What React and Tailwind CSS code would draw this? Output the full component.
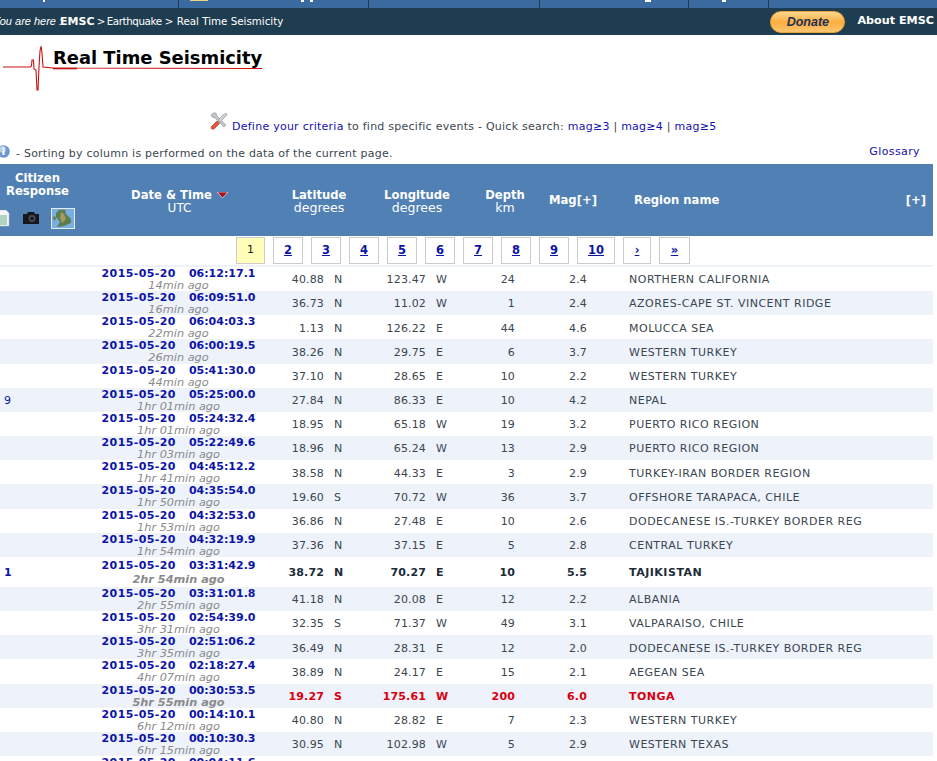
const rows = [
  ['06:12:17.1', '14min ago', '40.88', 'N', '123.47', 'W', '24', '2.4', 'NORTHERN CALIFORNIA'],
  ['06:09:51.0', '16min ago', '36.73', 'N', '11.02', 'W', '1', '2.4', 'AZORES-CAPE ST. VINCENT RIDGE'],
  ['06:04:03.3', '22min ago', '1.13', 'N', '126.22', 'E', '44', '4.6', 'MOLUCCA SEA'],
  ['06:00:19.5', '26min ago', '38.26', 'N', '29.75', 'E', '6', '3.7', 'WESTERN TURKEY'],
  ['05:41:30.0', '44min ago', '37.10', 'N', '28.65', 'E', '10', '2.2', 'WESTERN TURKEY'],
  ['05:25:00.0', '1hr 01min ago', '27.84', 'N', '86.33', 'E', '10', '4.2', 'NEPAL', '9'],
  ['05:24:32.4', '1hr 01min ago', '18.95', 'N', '65.18', 'W', '19', '3.2', 'PUERTO RICO REGION'],
  ['05:22:49.6', '1hr 03min ago', '18.96', 'N', '65.24', 'W', '13', '2.9', 'PUERTO RICO REGION'],
  ['04:45:12.2', '1hr 41min ago', '38.58', 'N', '44.33', 'E', '3', '2.9', 'TURKEY-IRAN BORDER REGION'],
  ['04:35:54.0', '1hr 50min ago', '19.60', 'S', '70.72', 'W', '36', '3.7', 'OFFSHORE TARAPACA, CHILE'],
  ['04:32:53.0', '1hr 53min ago', '36.86', 'N', '27.48', 'E', '10', '2.6', 'DODECANESE IS.-TURKEY BORDER REG'],
  ['04:32:19.9', '1hr 54min ago', '37.36', 'N', '37.15', 'E', '5', '2.8', 'CENTRAL TURKEY'],
  ['03:31:42.9', '2hr 54min ago', '38.72', 'N', '70.27', 'E', '10', '5.5', 'TAJIKISTAN', '1', 'big'],
  ['03:31:01.8', '2hr 55min ago', '41.18', 'N', '20.08', 'E', '12', '2.2', 'ALBANIA'],
  ['02:54:39.0', '3hr 31min ago', '32.35', 'S', '71.37', 'W', '49', '3.1', 'VALPARAISO, CHILE'],
  ['02:51:06.2', '3hr 35min ago', '36.49', 'N', '28.31', 'E', '12', '2.0', 'DODECANESE IS.-TURKEY BORDER REG'],
  ['02:18:27.4', '4hr 07min ago', '38.89', 'N', '24.17', 'E', '15', '2.1', 'AEGEAN SEA'],
  ['00:30:53.5', '5hr 55min ago', '19.27', 'S', '175.61', 'W', '200', '6.0', 'TONGA', '', 'red'],
  ['00:14:10.1', '6hr 12min ago', '40.80', 'N', '28.82', 'E', '7', '2.3', 'WESTERN TURKEY'],
  ['00:10:30.3', '6hr 15min ago', '30.95', 'N', '102.98', 'W', '5', '2.9', 'WESTERN TEXAS'],
];

const pages = [
  ['2', 'w-[30px]', 'mr-[8px]'], ['3', 'w-[30px]', 'mr-[8px]'], ['4', 'w-[30px]', 'mr-[8px]'],
  ['5', 'w-[30px]', 'mr-[8px]'], ['6', 'w-[30px]', 'mr-[8px]'], ['7', 'w-[30px]', 'mr-[8px]'],
  ['8', 'w-[30px]', 'mr-[8px]'], ['9', 'w-[30px]', 'mr-[8px]'], ['10', 'w-[38px]', 'mr-[8px]'],
  ['›', 'w-[28px]', 'mr-[8px]'], ['»', 'w-[31px]', ''],
];

function Seismo() {
  return (
    <svg width="262" height="56" viewBox="0 0 262 56" className="block">
      <path
        d="M3 22 H30 L31.5 21 L32 15 L33.5 15 L34 24 L36 25 L37 45 L38 45 L39 22 L40 6 L41 1 L42 8 L43 22 L53 23 L262 23.5"
        fill="none"
        stroke="#c81010"
        strokeWidth="1.1"
      />
      <path d="M53 23.5 H77" stroke="#c81010" strokeWidth="1.6" />
    </svg>
  );
}

function ToolsIcon() {
  return (
    <svg width="18" height="18" viewBox="0 0 18 18" className="shrink-0">
      <path d="M3 1 L6 1 L7 4 L16 13 L14 15 L5 6 L2 5 L1 3 Z" fill="#c3c7cd" stroke="#8b9098" strokeWidth="0.6" />
      <path d="M16 1 L17 3 L14 6 L10 10 L8 8 L13 3 Z" fill="#cfd3d8" stroke="#8b9098" strokeWidth="0.6" />
      <path d="M7 9 L9.5 11.5 L4 17 L1.5 17 L1 15 Z" fill="#df5a3c" stroke="#a8301c" strokeWidth="0.6" />
    </svg>
  );
}

function InfoIcon() {
  return (
    <svg width="13" height="13" viewBox="0 0 13 13" className="shrink-0 -ml-[3px] -mt-[6px]">
      <circle cx="6.5" cy="6.5" r="6.3" fill="#6f96cf" />
      <circle cx="5.5" cy="4.5" r="3.4" fill="#b9cfee" />
      <rect x="5.5" y="5.5" width="2" height="4.5" fill="#fff" />
      <rect x="5.5" y="2.6" width="2" height="2" fill="#fff" />
    </svg>
  );
}

function HeaderIcons() {
  return (
    <div className="flex items-center h-[24px] mt-[8px] -ml-[2px]">
      <svg width="11" height="17" viewBox="0 0 11 17" className="shrink-0">
        <path d="M0 0 H7 L10 3 V16 H0 Z" fill="#f5f8fa" stroke="#b8c4cc" strokeWidth="0.5" />
        <path d="M1 6 H8 M1 8 H8 M1 10 H8 M1 12 H8 M1 14 H8" stroke="#6fae84" strokeWidth="1" />
      </svg>
      <svg width="16" height="12" viewBox="0 0 16 12" className="ml-[13px] shrink-0">
        <path d="M0 2 H4 L5 0 H11 L12 2 H16 V12 H0 Z" fill="#15181c" />
        <circle cx="9" cy="6.5" r="3.4" fill="#4a5058" />
        <circle cx="9" cy="6.5" r="1.8" fill="#15181c" />
      </svg>
      <svg width="24" height="21" viewBox="0 0 24 21" className="ml-[12px] shrink-0">
        <rect x="0.5" y="0.5" width="23" height="20" fill="#79aee0" stroke="#e4ecf3" />
        <path d="M8 2 L14 1.5 L15 6 L20 11 L20 15 L13 18 L6 19 L9 14 L5 9 L5 5 Z" fill="#5b7d50" />
        <path d="M10 4 L13 6 L15 11 L11 15 L9 10 Z" fill="#a49a62" />
        <path d="M2 9 L4 8 L5 11 L3 13 Z" fill="#5b7d50" />
      </svg>
    </div>
  );
}

function DateLine({ time, className }) {
  return (
    <div className={`font-bold text-[#0c14a8] whitespace-nowrap ${className}`}>
      <span className="tracking-[0.4px]">2015-05-20</span>
      <span className="ml-[13px]">{time}</span>
    </div>
  );
}

function Row({ row, index }) {
  const [time, ago, lat, ns, lon, ew, depth, mag, region, count, kind] = row;
  const big = kind === 'big';
  const bold = big || kind === 'red';
  const tone = kind === 'red' ? 'text-[#d8000c] font-bold' : big ? 'text-[#1d2c38] font-bold' : 'text-[#3a4650]';
  return (
    <div className={`flex text-[11px] ${big ? 'h-[30px] pt-[2px]' : 'h-[24.17px] pt-[1px]'} ${index % 2 ? 'bg-[#edf2fb]' : 'bg-white'}`}>
      <div className={`w-[100px] pl-[4px] flex items-center text-[#0c14a8] ${big ? 'font-bold' : 'pt-[2px]'}`}>{count}</div>
      <div className="w-[157px] flex flex-col items-center">
        <DateLine time={time} className={big ? 'leading-[13px]' : 'leading-[12px]'} />
        <div className={`italic text-[#8a8a8a] leading-[12px] text-[11.3px] ${bold ? 'font-bold' : ''} ${big ? 'mt-[2px]' : ''}`}>{ago}</div>
      </div>
      <div className={`flex flex-1 items-center tracking-[0.15px] ${big ? '' : 'pt-[2px]'} ${tone}`}>
        <div className="w-[67px] text-right">{lat}</div>
        <div className="w-[25px] pl-[10px]">{ns}</div>
        <div className="w-[77px] text-right">{lon}</div>
        <div className="w-[30px] pl-[10px]">{ew}</div>
        <div className="w-[67px] text-right pr-[8px]">{depth}</div>
        <div className="w-[64px] text-right">{mag}</div>
        <div className="pl-[42px] whitespace-nowrap tracking-[0.5px]">{region}</div>
      </div>
    </div>
  );
}

export default function App() {
  return (
    <div className="w-[937px] h-[761px] overflow-hidden bg-white text-[11px] text-[#3a4650] font-['DejaVu_Sans','Liberation_Sans',sans-serif]">
      <div className="relative h-[8px] bg-[#3a6a9f] flex">
        <div className="w-[179px] border-r border-[#1f3d50]" />
        <div className="w-[190px] border-r border-[#1f3d50]" />
        <div className="w-[171px] border-r border-[#1f3d50]" />
        <div className="w-[149px] border-r border-[#1f3d50]" />
        <div className="w-[80px] border-r border-[#1f3d50]" />
        {/* bottoms of the menu labels and icon, the rest is scrolled out of view */}
        <span className="absolute left-[43px] top-0 w-[2px] h-[2px] bg-white" />
        <span className="absolute left-[190px] top-0 w-[18px] h-[1px] bg-[#e8d77a]" />
        <span className="absolute left-[301px] top-0 w-[3px] h-[2px] bg-white" />
        <span className="absolute left-[310px] top-0 w-[3px] h-[2px] bg-white" />
        <span className="absolute left-[645px] top-0 w-[6px] h-[2px] bg-white" />
        <span className="absolute left-[722px] top-0 w-[4px] h-[2px] bg-white" />
      </div>

      <div className="h-[27px] bg-[#1f3d50] flex items-center justify-between text-white">
        <div className="flex items-baseline whitespace-pre -ml-[7px] text-[10.3px]">
          <span className="italic w-[67px] font-['Liberation_Sans',sans-serif] text-[11px]">You are here :</span>
          <span className="font-bold text-[11px]">EMSC</span>
          <span className="tracking-[-1px]"> &gt; </span>
          <span className="tracking-[-0.4px]">Earthquake</span>
          <span> &gt; Real Time Seismicity</span>
        </div>
        <div className="flex items-center">
          <div className="w-[75px] h-[22px] mt-[1px] rounded-full border border-[#e8a33a] bg-gradient-to-b from-[#fdd78e] via-[#fbae3c] to-[#fcc470] flex items-center justify-center italic font-bold font-['Liberation_Sans',sans-serif] text-[#1c3058] text-[12.5px]">
            Donate
          </div>
          <div className="ml-[12px] mr-[3px] font-bold text-[11.2px]">About EMSC</div>
        </div>
      </div>

      <div className="relative h-[129px]">
        <div className="pt-[10px]"><Seismo /></div>
        <h1 className="absolute left-[53px] top-[11px] text-[17.9px] leading-[24px] font-bold text-black">Real Time Seismicity</h1>
        <div className="absolute left-[210px] top-[77px] flex items-start whitespace-nowrap tracking-[0.25px]">
          <ToolsIcon />
          <div className="ml-[4px] mt-[8px] leading-[14px]">
            <span className="text-[#1410b4]">Define your criteria</span> to find specific events - Quick search:{' '}
            <span className="text-[#1410b4]">mag≥3</span> | <span className="text-[#1410b4]">mag≥4</span> | <span className="text-[#1410b4]">mag≥5</span>
          </div>
        </div>
        <div className="absolute left-0 right-[17px] top-[111px] flex items-center justify-between tracking-[0.23px]">
          <div className="flex items-center">
            <InfoIcon />
            <span className="ml-[6px]">- Sorting by column is performed on the data of the current page.</span>
          </div>
          <span className="text-[#1410b4] -mt-[5px] tracking-[0.4px]">Glossary</span>
        </div>
      </div>

      <div className="w-[933px]">
        <div className="h-[72px] bg-[#5080b4] flex text-white text-[12.5px] leading-[13px]">
          <div className="w-[77px] shrink-0 -ml-[1px] pt-[8px] flex flex-col items-center font-bold text-[11.6px] text-center">
            <div>Citizen</div>
            <div>Response</div>
            <HeaderIcons />
          </div>
          <div className="w-[207px] shrink-0 flex flex-col items-center justify-center pt-[3px]">
            <div className="font-bold text-[11.6px] flex items-center">
              Date &amp; Time
              <svg width="11" height="6" viewBox="0 0 11 6" className="ml-[5px]"><path d="M0 0 H11 L5.5 6 Z" fill="#a81020" stroke="#fff" strokeWidth="0.6" /></svg>
            </div>
            <div className="text-[12px]">UTC</div>
          </div>
          <div className="w-[72px] shrink-0 flex flex-col items-center justify-center pt-[3px]">
            <div className="font-bold text-[11.6px] leading-[12px]">Latitude</div>
            <div>degrees</div>
          </div>
          <div className="w-[124px] shrink-0 flex flex-col items-center justify-center pt-[3px]">
            <div className="font-bold text-[11.6px] leading-[12px]">Longitude</div>
            <div>degrees</div>
          </div>
          <div className="w-[52px] shrink-0 flex flex-col items-center justify-center pt-[3px]">
            <div className="font-bold text-[11.6px] leading-[12px]">Depth</div>
            <div>km</div>
          </div>
          <div className="w-[84px] shrink-0 flex items-center pl-[18px] pt-[1px] font-bold text-[11.6px]">Mag[+]</div>
          <div className="flex-1 flex items-center justify-between pl-[19px] pr-[7px] pt-[1px] font-bold text-[11.6px]">
            <span>Region name</span>
            <span>[+]</span>
          </div>
        </div>

        <div className="h-[29px] pl-[236px] pt-[1px] flex">
          <div className="w-[29px] h-[27px] mr-[8px] bg-[#ffffb9] border border-[#ccc] flex items-center justify-center text-[#222]">1</div>
          {pages.map(([label, width, margin]) => (
            <div key={label} className={`${width} ${margin} h-[27px] border border-[#ccc] flex items-center justify-center font-bold underline text-[#0c14a8] text-[11.5px]`}>
              {label}
            </div>
          ))}
        </div>
        <div className="h-[2px] bg-[#edf2fb]" />

        {rows.map((row, i) => (
          <Row key={row[0]} row={row} index={i} />
        ))}
        <div className="flex h-[24.17px] bg-white text-[11px] pt-[1px]">
          <div className="w-[100px]" />
          <div className="w-[157px] flex justify-center">
            <DateLine time="00:04:11.6" className="leading-[12px]" />
          </div>
        </div>
      </div>
    </div>
  );
}
